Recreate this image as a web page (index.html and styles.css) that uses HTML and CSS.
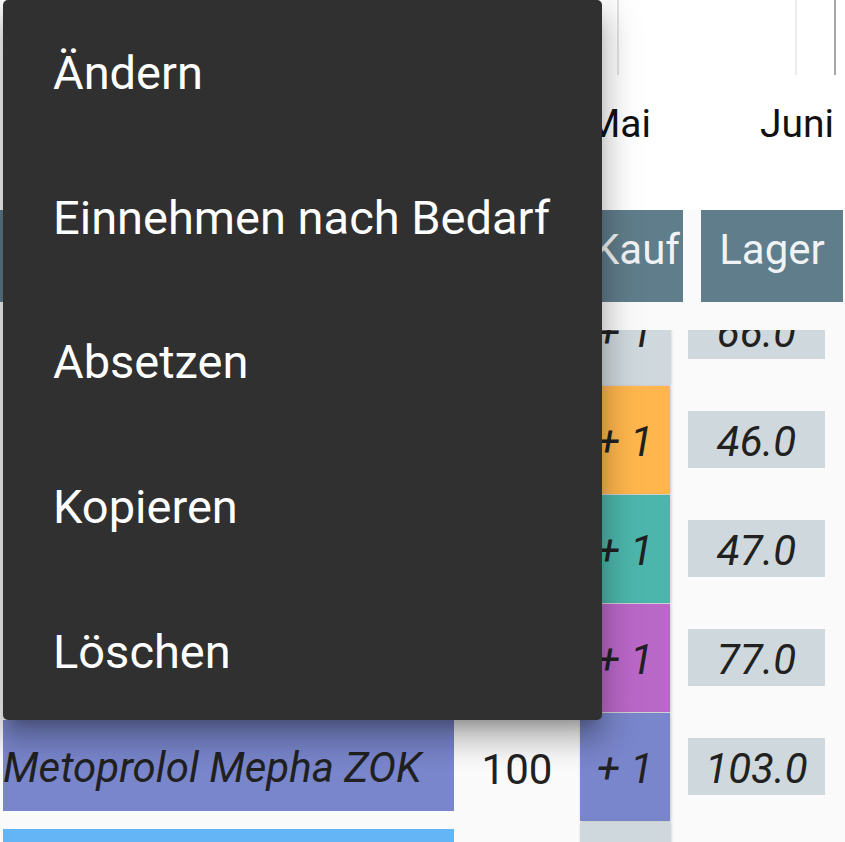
FILE: index.html
```html
<!DOCTYPE html>
<html lang="de">
<head>
<meta charset="utf-8">
<title>Medikamente</title>
<link rel="stylesheet" href="styles.css">
</head>
<body>
<div class="screen">
  <div class="chart">
    <span class="spacer"></span>
    <span class="gridline gl-a"></span>
    <span class="spacer"></span>
    <span class="gridline gl-b"></span>
    <span class="spacer"></span>
    <span class="gridline gl-c"></span>
  </div>
  <div class="months">
    <span class="month">Mai</span>
    <span class="month">Juni</span>
  </div>
  <div class="thead">
    <div class="th th-name">Medikament</div>
    <div class="th th-qty">Pack.</div>
    <div class="th th-kauf">Kauf</div>
    <div class="th th-lager">Lager</div>
  </div>
  <div class="tbody">
    <div class="rows">
      <div class="row">
        <div class="name c-grey">Aspirin Cardio</div>
        <div class="qty">100</div>
        <div class="kauf c-grey">+ 1</div>
        <div class="lager">66.0</div>
      </div>
      <div class="row">
        <div class="name c-orange">Pantoprazol</div>
        <div class="qty">60</div>
        <div class="kauf c-orange">+ 1</div>
        <div class="lager">46.0</div>
      </div>
      <div class="row">
        <div class="name c-teal">Atorvastatin</div>
        <div class="qty">60</div>
        <div class="kauf c-teal">+ 1</div>
        <div class="lager">47.0</div>
      </div>
      <div class="row">
        <div class="name c-purple">Lisinopril</div>
        <div class="qty">90</div>
        <div class="kauf c-purple">+ 1</div>
        <div class="lager">77.0</div>
      </div>
      <div class="row">
        <div class="name c-indigo">Metoprolol Mepha ZOK</div>
        <div class="qty">100</div>
        <div class="kauf c-indigo">+ 1</div>
        <div class="lager">103.0</div>
      </div>
      <div class="row">
        <div class="name c-blue">Vitamin D3</div>
        <div class="qty">30</div>
        <div class="kauf c-grey">+ 1</div>
        <div class="lager">12.0</div>
      </div>
    </div>
  </div>

  <div class="menu">
    <div class="menu-item">Ändern</div>
    <div class="menu-item">Einnehmen nach Bedarf</div>
    <div class="menu-item">Absetzen</div>
    <div class="menu-item">Kopieren</div>
    <div class="menu-item">Löschen</div>
  </div>
</div>
</body>
</html>
```

FILE: styles.css
```css
* { box-sizing: border-box; }

html, body {
  margin: 0;
  padding: 0;
}

body {
  background: #fafafa;
  font-family: Roboto, "Noto Sans", sans-serif;
  color: #212121;
}

.screen {
  position: relative;
  width: 845px;
  height: 842px;
  overflow: hidden;
  background: #fafafa;
}

/* chart strip at the top */
.chart {
  display: grid;
  grid-template-columns: 617px 2px 176px 2px 37px 2px 1fr;
  height: 75px;
  background: #ffffff;
}
.gridline { display: block; height: 75px; }
.gl-a { background: #e3e3e3; }
.gl-b { background: #ececec; }
.gl-c { background: #a8a8a8; }

.months {
  display: grid;
  grid-template-columns: 1fr 183px;
  height: 135px;
  padding: 26px 11px 0 0;
  background: #ffffff;
}
.month {
  font-size: 39px;
  line-height: normal;
  text-align: right;
  color: #111;
}

/* table header */
.thead {
  display: flex;
  gap: 18px;
  height: 92px;
}
.th {
  display: flex;
  align-items: center;
  justify-content: center;
  padding-bottom: 14px;
  background: #607d8b;
  color: rgba(255, 255, 255, 0.92);
  font-size: 42px;
}
.th-name { width: 454px; }
.th-qty { width: 100px; }
.th-kauf { width: 93px; }
.th-lager { width: 142px; }

/* table body */
.tbody {
  margin-top: 28px;
  height: 512px;
  overflow: hidden;
}
.rows { margin-top: -53px; }

.row {
  display: grid;
  grid-template-columns: 451px 126px 90px 155px;
  height: 109px;
  padding-left: 3px;
  font-size: 42px;
}

.name {
  margin-top: 7px;
  height: 91px;
  display: flex;
  align-items: center;
  padding-top: 3px;
  font-style: italic;
  white-space: nowrap;
  overflow: hidden;
}
.qty {
  display: flex;
  align-items: center;
  justify-content: center;
  height: 109px;
  padding-top: 3px;
}
.kauf {
  height: 108px;
  display: flex;
  align-items: center;
  justify-content: center;
  padding-top: 3px;
  font-style: italic;
  box-shadow: 1px 1px 3px rgba(0, 0, 0, 0.22);
}
.lager {
  margin: 25px 0 0 18px;
  height: 57px;
  display: flex;
  align-items: center;
  justify-content: center;
  padding-top: 3px;
  background: #cfd8dc;
  font-style: italic;
}

.c-grey { background: #cfd8dc; }
.c-orange { background: #ffb74d; }
.c-teal { background: #4db6ac; }
.c-purple { background: #ba68c8; }
.c-indigo { background: #7986cb; }
.c-blue { background: #64b5f6; }

/* popup menu */
.menu {
  position: absolute;
  top: 0;
  left: 3px;
  width: 599px;
  height: 720px;
  background: #303030;
  border-radius: 5px;
  overflow: hidden;
  z-index: 10;
  box-shadow:
    0 13px 13px -8px rgba(0, 0, 0, 0.22),
    0 21px 26px 3px rgba(0, 0, 0, 0.16),
    0 8px 40px 6px rgba(0, 0, 0, 0.14);
}
.menu-item {
  height: 144.75px;
  display: flex;
  align-items: center;
  padding: 0 0 0 50px;
  font-size: 47px;
  color: #ffffff;
  white-space: nowrap;
}
```
